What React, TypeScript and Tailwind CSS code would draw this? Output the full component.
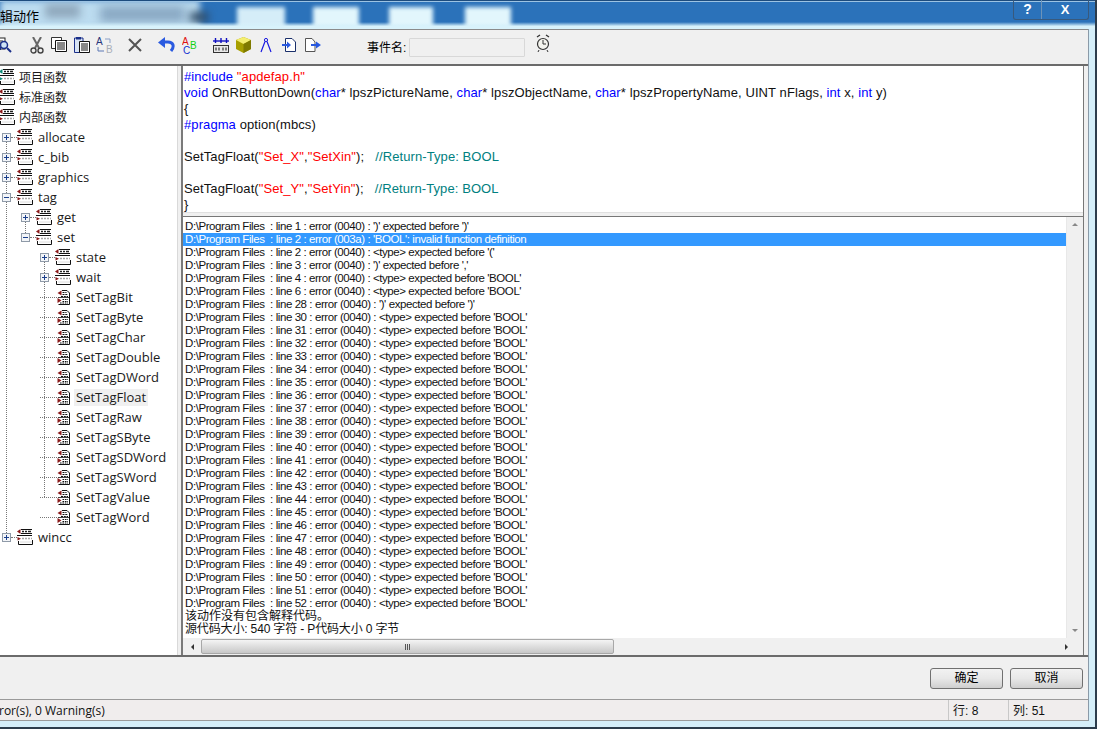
import React from "react";

const sans = "font-['Liberation_Sans','Noto_Sans_CJK_SC',sans-serif]";

function FolderIcon({ tone = "#8b1a1a" }: { tone?: string }) {
  return (
    <svg width="16" height="16" viewBox="0 0 16 16" className="shrink-0">
      <path d="M0 2.5 L3.5 0 V5 Z" fill={tone} />
      <path d="M4 0.5 H15 M4 4.5 H15" stroke="#111" strokeWidth="1" />
      <path d="M5 2.5 H7 M8 2.5 H10 M11 2.5 H14" stroke="#222" strokeWidth="1.4" />
      <path d="M0 6.5 H15" stroke="#111" strokeWidth="1" />
      <path d="M0.5 8 L4 9.8 L0.5 11.5 Z" fill={tone} />
      <path d="M5 9.5 H15" stroke="#a8a8a8" strokeWidth="1.4" strokeDasharray="2 1" />
      <path d="M1.5 12 V15.5 H15.5 V11" stroke="#111" strokeWidth="1" fill="none" />
      <path d="M3 13 H15" stroke="#dcdcdc" strokeWidth="1" />
    </svg>
  );
}

function FnIcon() {
  return (
    <svg width="13" height="15" viewBox="0 0 13 15" className="shrink-0">
      <path d="M5 0.5 H10 L12.5 3 V14.5 H1.5" fill="#fff" stroke="#111" strokeWidth="1" />
      <path d="M0.5 3 L4.5 0.5 V5.5 Z" fill="#8b1a1a" />
      <path d="M5.5 2.5 H9.5 M5.5 4.5 H11 M4 6.5 H11" stroke="#111" strokeWidth="1.2" strokeDasharray="2 0.8" />
      <path d="M1 7.5 H12" stroke="#111" strokeWidth="0.8" />
      <path d="M5.5 9.5 H11 M5.5 11.5 H11 M3 13 H11" stroke="#111" strokeWidth="1.2" strokeDasharray="1.6 0.8" />
      <path d="M0.5 8 L4.5 10.5 L0.5 13 Z" fill="#8b1a1a" />
    </svg>
  );
}

function Expander({ open }: { open?: boolean }) {
  return (
    <span className="relative w-[9px] h-[9px] shrink-0 border border-[#8f9aa8] bg-[#f3f5f8]">
      <span className="absolute left-[1px] top-[3px] w-[5px] h-[1px] bg-[#1b3f8b]" />
      {!open && <span className="absolute left-[3px] top-[1px] w-[1px] h-[5px] bg-[#1b3f8b]" />}
    </span>
  );
}

type Node = {
  label: string;
  depth: number;
  kind: "plus" | "minus" | "fn" | "root";
  hi?: boolean;
  tone?: string;
};

const nodes: Node[] = [
  { label: "项目函数", depth: 0, kind: "root", tone: "#0f8a7a" },
  { label: "标准函数", depth: 0, kind: "root" },
  { label: "内部函数", depth: 0, kind: "root" },
  { label: "allocate", depth: 0, kind: "plus" },
  { label: "c_bib", depth: 0, kind: "plus" },
  { label: "graphics", depth: 0, kind: "plus" },
  { label: "tag", depth: 0, kind: "minus" },
  { label: "get", depth: 1, kind: "plus" },
  { label: "set", depth: 1, kind: "minus" },
  { label: "state", depth: 2, kind: "plus" },
  { label: "wait", depth: 2, kind: "plus" },
  { label: "SetTagBit", depth: 2, kind: "fn" },
  { label: "SetTagByte", depth: 2, kind: "fn" },
  { label: "SetTagChar", depth: 2, kind: "fn" },
  { label: "SetTagDouble", depth: 2, kind: "fn" },
  { label: "SetTagDWord", depth: 2, kind: "fn" },
  { label: "SetTagFloat", depth: 2, kind: "fn", hi: true },
  { label: "SetTagRaw", depth: 2, kind: "fn" },
  { label: "SetTagSByte", depth: 2, kind: "fn" },
  { label: "SetTagSDWord", depth: 2, kind: "fn" },
  { label: "SetTagSWord", depth: 2, kind: "fn" },
  { label: "SetTagValue", depth: 2, kind: "fn" },
  { label: "SetTagWord", depth: 2, kind: "fn" },
  { label: "wincc", depth: 0, kind: "plus" },
];

const indentClass = ["pl-[2px]", "pl-[21px]", "pl-[40px]"];

function TreeRow({ n }: { n: Node }) {
  const isRoot = n.kind === "root";
  const isFn = n.kind === "fn";
  return (
    <div className={`relative h-5 flex items-center ${isRoot ? "-ml-[1px]" : indentClass[n.depth]}`}>
      {isFn ? (
        <span className="w-[17px] shrink-0 h-[1px] border-t border-dotted border-[#777]" />
      ) : isRoot ? null : (
        <>
          <Expander open={n.kind === "minus"} />
          <span className="w-[6px] shrink-0 border-t border-dotted border-[#777]" />
        </>
      )}
      {isFn ? <FnIcon /> : <FolderIcon tone={n.tone} />}
      <span
        className={`px-[2px] h-[17px] leading-[17px] text-[#1a1a1a] whitespace-nowrap ${
          isRoot
            ? `ml-[2px] mt-[2px] text-[12px] ${sans}`
            : `${isFn ? "ml-[4px]" : "ml-[3px]"} text-[13px] font-['Open_Sans','Noto_Sans_CJK_SC',sans-serif]`
        } ${n.hi ? "bg-[#f0f0f0]" : ""}`}
      >
        {n.label}
      </span>
    </div>
  );
}

const K = ({ children }: { children: React.ReactNode }) => <span className="text-[#0000ff]">{children}</span>;
const S = ({ children }: { children: React.ReactNode }) => <span className="text-[#ff0000]">{children}</span>;
const C = ({ children }: { children: React.ReactNode }) => <span className="text-[#008080]">{children}</span>;

function line(n: number, code: string, msg: string) {
  return `D:\\Program Files  : line ${n} : error (${code}) : ${msg}`;
}
const T = "<type> expected before 'BOOL'";
const errors: string[] = [
  line(1, "0040", "')' expected before ')'"),
  line(2, "003a", "'BOOL': invalid function definition"),
  line(2, "0040", "<type> expected before '('"),
  line(3, "0040", "')' expected before ','"),
  line(4, "0040", T),
  line(6, "0040", T),
  line(28, "0040", "')' expected before ')'"),
  ...Array.from({ length: 23 }, (_, i) => line(30 + i, "0040", T)),
];

function Tb({ children, className = "" }: { children: React.ReactNode; className?: string }) {
  return <span className={`inline-flex items-center justify-center h-[24px] shrink-0 ${className}`}>{children}</span>;
}

function Toolbar() {
  return (
    <div className="h-[37px] flex items-center bg-[#f0f0f0] border-t border-[#8a8a8a] border-b-2 border-b-[#6b6b6b] pb-[4px] overflow-hidden">
      <Tb className="w-[14px] -ml-[2px]">
        <svg width="14" height="18" viewBox="0 0 14 18">
          <rect x="-2" y="2" width="9" height="11" fill="#fff" stroke="#222" />
          <path d="M-1 5 H5 M-1 7 H4" stroke="#222" />
          <circle cx="6" cy="9" r="3.5" fill="#cfe3f5" stroke="#1a2f8a" strokeWidth="1.5" />
          <path d="M9 12 L13 16" stroke="#1a2f8a" strokeWidth="2" />
          <rect x="-1" y="11" width="4" height="3" fill="#1a2f8a" />
        </svg>
      </Tb>
      <Tb className="w-[16px] ml-[17px]">
        <svg width="14" height="17" viewBox="0 0 14 17">
          <path d="M3 0 L9 11 M11 0 L5 11" stroke="#666" strokeWidth="2" />
          <circle cx="3.5" cy="13.5" r="2.5" fill="none" stroke="#444" strokeWidth="1.4" />
          <circle cx="10.5" cy="13.5" r="2.5" fill="none" stroke="#444" strokeWidth="1.4" />
        </svg>
      </Tb>
      <Tb className="w-[16px] ml-[6px]">
        <svg width="16" height="16" viewBox="0 0 16 16">
          <path d="M0.5 0.5 H10.5 V11.5 H0.5 Z" fill="#fff" stroke="#333" />
          <path d="M4.5 3.5 H15.5 V14.5 H4.5 Z" fill="#fff" stroke="#111" />
          <path d="M6 6 H14 M6 8 H14 M6 10 H14 M6 12 H14" stroke="#111" />
        </svg>
      </Tb>
      <Tb className="w-[17px] ml-[6px]">
        <svg width="17" height="17" viewBox="0 0 17 17">
          <path d="M1.5 1 H10 V15.5 H1.5 Z" fill="#d8e4f5" stroke="#1a2f8a" />
          <rect x="3" y="0" width="5" height="2.5" fill="#1a2f8a" />
          <path d="M6.5 4.5 H16.5 V15.5 H6.5 Z" fill="#fff" stroke="#111" />
          <path d="M8 7 H15 M8 9 H15 M8 11 H15 M8 13 H15" stroke="#111" />
        </svg>
      </Tb>
      <Tb className="w-[17px] ml-[6px]">
        <svg width="17" height="17" viewBox="0 0 17 17">
          <text x="0" y="8" fontSize="10" fontFamily="Liberation Sans" fill="#26357a">A</text>
          <text x="10" y="16" fontSize="10" fontFamily="Liberation Sans" fill="#a8aeb8">B</text>
          <path d="M9 2 H14 V6" stroke="#8aa0c8" fill="none" />
          <path d="M2 10 V14 H8" stroke="#5d79b5" fill="none" />
        </svg>
      </Tb>
      <Tb className="w-[14px] ml-[15px]">
        <svg width="14" height="14" viewBox="0 0 14 14">
          <path d="M1 1 L13 13 M13 1 L1 13" stroke="#555" strokeWidth="2" />
        </svg>
      </Tb>
      <Tb className="w-[17px] ml-[16px]">
        <svg width="17" height="16" viewBox="0 0 17 16">
          <path d="M3 5 H10 C15 5 17 9 13 14" fill="none" stroke="#2a5ae0" strokeWidth="3" />
          <path d="M0 5.5 L7 0 V11 Z" fill="#2a5ae0" />
        </svg>
      </Tb>
      <Tb className="w-[16px] ml-[7px]">
        <svg width="16" height="17" viewBox="0 0 16 17" fontFamily="Liberation Sans" fontSize="10">
          <text x="0" y="8" fill="#e01010">A</text>
          <text x="1" y="17" fill="#1030d0">C</text>
          <text x="8" y="12" fill="#10d010">B</text>
        </svg>
      </Tb>
      <Tb className="w-[16px] ml-[15px]">
        <svg width="16" height="15" viewBox="0 0 16 15">
          <path d="M2.5 0 V5 M8 0 V5 M13.5 0 V5" stroke="#1010c0" strokeWidth="1.4" />
          <path d="M0 3 H16" stroke="#1010c0" strokeWidth="1.4" />
          <rect x="0.5" y="7.5" width="15" height="7" fill="#e8e8e8" stroke="#333" />
          <path d="M3 9.5 V12.5 M6 9.5 V12.5 M10 9.5 V12.5 M13 9.5 V12.5" stroke="#111" />
        </svg>
      </Tb>
      <Tb className="w-[15px] ml-[7px]">
        <svg width="15" height="16" viewBox="0 0 15 16">
          <path d="M7.5 0 L15 3 V12 L7.5 16 L0 12 V3 Z" fill="#a8a000" />
          <path d="M7.5 0 L15 3 L7.5 7 L0 3 Z" fill="#f4ee70" />
          <path d="M7.5 7 V16 L15 12 V3 Z" fill="#7f7a00" />
        </svg>
      </Tb>
      <Tb className="w-[12px] ml-[9px]">
        <svg width="12" height="16" viewBox="0 0 12 16">
          <circle cx="6" cy="3" r="1.6" fill="none" stroke="#1a1ae0" />
          <path d="M5 4.5 L1 15 M7 4.5 L11 15" stroke="#1a1ae0" strokeWidth="1.2" fill="none" />
        </svg>
      </Tb>
      <Tb className="w-[14px] ml-[10px]">
        <svg width="14" height="14" viewBox="0 0 14 14">
          <path d="M3.5 0.5 H10 L13.5 4 V13.5 H3.5 Z" fill="#fff" stroke="#1a2f6a" />
          <path d="M0 6 H5 V3.5 L9 7 L5 10.5 V8 H0 Z" fill="#2a5ae0" />
        </svg>
      </Tb>
      <Tb className="w-[16px] ml-[9px]">
        <svg width="16" height="14" viewBox="0 0 16 14">
          <path d="M0.5 0.5 H7 L10 4 V13.5 H0.5 Z" fill="#fff" stroke="#555" />
          <path d="M6 6 H11 V3.5 L16 7 L11 10.5 V8 H6 Z" fill="#2a5ae0" />
        </svg>
      </Tb>
      <span className={`ml-[46px] mt-[5px] text-[12px] text-black shrink-0 ${sans}`}>事件名:</span>
      <span className="ml-[3px] mt-[4px] w-[116px] h-[19px] shrink-0 border border-[#d8d8d8] bg-[#f0f0f0] rounded-[1px]" />
      <Tb className="w-[16px] ml-[10px] -mt-[4px]">
        <svg width="16" height="18" viewBox="0 0 16 18">
          <circle cx="8" cy="10" r="5.5" fill="#f4f4ee" stroke="#333" strokeWidth="1.2" />
          <path d="M8 6 V10 H11" stroke="#333" fill="none" />
          <path d="M2 3 L5 1 M14 3 L11 1" stroke="#333" strokeWidth="1.4" />
          <path d="M4 16 L3 18 M12 16 L13 18" stroke="#333" />
        </svg>
      </Tb>
    </div>
  );
}

function TitleBar() {
  return (
    <div className="relative h-[29px] shrink-0 overflow-hidden bg-[#2b72ba]">
      <div className="absolute left-0 top-0 w-[200px] h-full bg-[#bcdcf0] blur-[3px]" />
      <div className="absolute left-[45px] top-[4px] w-[35px] h-[14px] bg-[#8fa8bc] blur-[4px]" />
      <div className="absolute left-[100px] top-[6px] w-[85px] h-[16px] bg-[#8aa9c4] blur-[5px]" />
      <div className="absolute left-[190px] top-[12px] w-[18px] h-[10px] bg-[#2e4a66] blur-[4px]" />
      <div className="absolute left-[237px] top-[7px] w-[48px] h-[22px] bg-[#d5edf8] blur-[2px]" />
      <div className="absolute left-[313px] top-[7px] w-[46px] h-[22px] bg-[#e2f6fc] blur-[2px]" />
      <div className="absolute left-[389px] top-[7px] w-[44px] h-[22px] bg-[#e2f6fc] blur-[2px]" />
      <div className="absolute left-[465px] top-[7px] w-[46px] h-[22px] bg-[#e2f6fc] blur-[2px]" />
      <div className="absolute left-0 right-0 bottom-0 h-[7px] bg-gradient-to-b from-transparent to-[#d8f2fb] to-60%" />
      <div className="absolute left-0 right-0 top-0 h-[1px] bg-[#1d4c7e]" />
      <div className="absolute left-0 right-0 top-[1px] h-[1px] bg-[#9cc3e3]" />
      <span className={`absolute left-0 top-[7px] text-[13px] text-black ${sans}`}>辑动作</span>
      <div className="absolute right-[6px] top-0 h-[20px] flex border border-t-0 border-[#38597c] rounded-b-[3px] overflow-hidden">
        <span className="w-[28px] flex items-center justify-center text-white font-bold text-[14px] border-r border-[#6d93b8] font-['Liberation_Sans',sans-serif]">?</span>
        <span className="w-[46px] flex items-center justify-center text-white font-bold text-[13px] font-['Liberation_Sans',sans-serif]">X</span>
      </div>
    </div>
  );
}

export default function App() {
  return (
    <div className="w-[1097px] h-[729px] overflow-hidden flex flex-col bg-[#d4eef9] border-r-2 border-b-2 border-[#2c3c4c]">
      <TitleBar />
      <div className="flex-1 min-h-0 mb-[6px] mr-[6px] flex flex-col bg-[#f0f0f0] border-r border-[#8a9aa8]">
        <Toolbar />
        <div className="h-[589px] shrink-0 flex pr-[4px]">
          <div className="relative w-[178px] shrink-0 bg-white pt-[1px] overflow-hidden border-r border-[#d9d9d9]">
            <span className="absolute left-[6px] top-[71px] h-[400px] border-l border-dotted border-[#777]" />
            <span className="absolute left-[25px] top-[151px] h-[20px] border-l border-dotted border-[#777]" />
            <span className="absolute left-[44px] top-[191px] h-[240px] border-l border-dotted border-[#777]" />
            {nodes.map((n) => (
              <TreeRow key={n.label} n={n} />
            ))}
          </div>
          <div className="flex-1 min-w-0 ml-[3px] flex flex-col border-l-2 border-l-[#7a7a7a] border-r border-r-[#777]">
            <div className="h-[147px] shrink-0 bg-white pl-[1px] pt-[3px] text-[13px] leading-[16px] text-[#111] font-['Liberation_Sans',sans-serif] whitespace-nowrap tracking-[0.09px] border-b border-[#e0e0e0]">
              <div><K>#include</K> <S>"apdefap.h"</S></div>
              <div>
                <K>void</K> OnRButtonDown(<K>char</K>* lpszPictureName, <K>char</K>* lpszObjectName, <K>char</K>* lpszPropertyName, UINT nFlags, <K>int</K> x, <K>int</K> y)
              </div>
              <div>{"{"}</div>
              <div><K>#pragma</K> option(mbcs)</div>
              <div className="h-4" />
              <div>SetTagFloat(<S>"Set_X"</S>,<S>"SetXin"</S>);&nbsp;&nbsp; <C>//Return-Type: BOOL</C></div>
              <div className="h-4" />
              <div>SetTagFloat(<S>"Set_Y"</S>,<S>"SetYin"</S>);&nbsp;&nbsp; <C>//Return-Type: BOOL</C></div>
              <div>{"}"}</div>
            </div>
            <div className="h-[3px] shrink-0 bg-[#f0f0f0]" />
            <div className="flex-1 min-h-0 flex flex-col bg-white border-t border-[#777]">
              <div className="flex-1 min-h-0 flex">
                <div className="flex-1 min-w-0 overflow-hidden pt-[3px]">
                  {errors.map((e, i) => (
                    <div
                      key={i}
                      className={`h-[13px] leading-[13px] pl-[2px] text-[11.5px] whitespace-pre font-['Liberation_Sans',sans-serif] tracking-[-0.42px] ${
                        i === 1 ? "bg-[#3399ff] text-white" : "text-[#111]"
                      }`}
                    >
                      {e}
                    </div>
                  ))}
                  <div className={`h-[13px] leading-[13px] pl-[2px] text-[12px] text-[#111] ${sans}`}>该动作没有包含解释代码。</div>
                  <div className={`h-[13px] leading-[13px] pl-[2px] text-[12px] text-[#111] whitespace-pre tracking-[-0.15px] ${sans}`}>源代码大小: 540 字符 - P代码大小 0 字节</div>
                </div>
                <div className="w-[17px] shrink-0 bg-[#f0f0f0] flex flex-col justify-between items-center py-[6px] border-l border-[#e8e8e8]">
                  <span className="w-0 h-0 border-x-[3px] border-x-transparent border-b-[3px] border-b-[#888]" />
                  <span className="w-0 h-0 border-x-[3px] border-x-transparent border-t-[3px] border-t-[#888]" />
                </div>
              </div>
              <div className="h-[17px] shrink-0 flex items-center bg-[#f0f0f0]">
                <span className="w-[18px] flex justify-center">
                  <span className="w-0 h-0 border-y-[3px] border-y-transparent border-r-[3px] border-r-[#333]" />
                </span>
                <span className="w-[413px] h-[15px] flex items-center justify-center gap-[1px] rounded-[2px] border border-[#a8a8a8] bg-gradient-to-b from-[#f4f4f4] to-[#c8c8c8]">
                  <span className="w-[1px] h-[6px] bg-[#555]" />
                  <span className="w-[1px] h-[6px] bg-[#555]" />
                  <span className="w-[1px] h-[6px] bg-[#555]" />
                </span>
                <span className="flex-1" />
                <span className="w-[34px] flex justify-center">
                  <span className="w-0 h-0 border-y-[3px] border-y-transparent border-l-[3px] border-l-[#333]" />
                </span>
              </div>
            </div>
          </div>
        </div>
        <div className="h-[44px] shrink-0 border-t-2 border-[#6b6b6b] flex items-center justify-end gap-[7px] pr-[5px]">
          <button className={`w-[73px] h-[21px] rounded-[3px] border border-[#707070] bg-gradient-to-b from-[#f2f2f2] via-[#e8e8e8] to-[#cfcfcf] text-[12px] text-black ${sans}`}>确定</button>
          <button className={`w-[73px] h-[21px] rounded-[3px] border border-[#707070] bg-gradient-to-b from-[#f2f2f2] via-[#e8e8e8] to-[#cfcfcf] text-[12px] text-black ${sans}`}>取消</button>
        </div>
        <div className="h-[22px] shrink-0 flex items-center bg-[#f0eded] border-y border-[#9a9a9a] text-[12px] text-[#111]">
          <span className="flex-1 font-['Open_Sans',sans-serif] whitespace-nowrap -ml-[1px] pt-[2px]">ror(s), 0 Warning(s)</span>
          <span className={`w-[60px] h-full flex items-center pl-[4px] pt-[1px] border-l border-[#c8c8c8] ${sans}`}>行: 8</span>
          <span className={`w-[80px] h-full flex items-center pl-[4px] pt-[1px] border-l border-[#c8c8c8] ${sans}`}>列: 51</span>
        </div>
      </div>
    </div>
  );
}
